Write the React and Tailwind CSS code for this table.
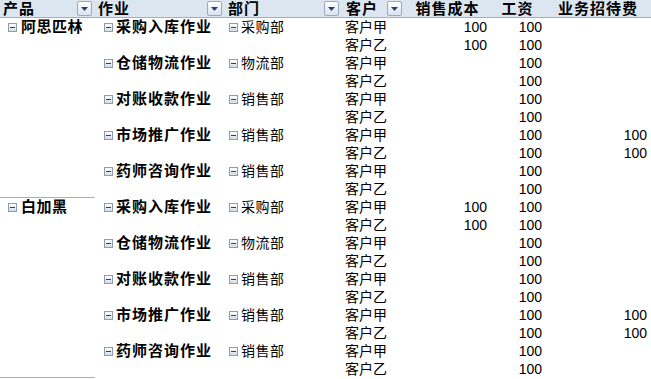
import React from "react";

const works = [
  { name: "采购入库作业", dept: "采购部", rows: [["客户甲", "100", "100", ""], ["客户乙", "100", "100", ""]] },
  { name: "仓储物流作业", dept: "物流部", rows: [["客户甲", "", "100", ""], ["客户乙", "", "100", ""]] },
  { name: "对账收款作业", dept: "销售部", rows: [["客户甲", "", "100", ""], ["客户乙", "", "100", ""]] },
  { name: "市场推广作业", dept: "销售部", rows: [["客户甲", "", "100", "100"], ["客户乙", "", "100", "100"]] },
  { name: "药师咨询作业", dept: "销售部", rows: [["客户甲", "", "100", ""], ["客户乙", "", "100", ""]] },
];

const products = ["阿思匹林", "白加黑"];

function Drop() {
  return (
    <div className="w-[15px] h-[15px] border border-[#9aa9bf] rounded-[2px] bg-gradient-to-b from-[#ffffff] to-[#dbe3ee] flex items-center justify-center">
      <svg width="7" height="4" viewBox="0 0 7 4">
        <path d="M0 0 L7 0 L3.5 4 Z" fill="#2b3f73" />
      </svg>
    </div>
  );
}

function Minus() {
  return (
    <div className="w-[9px] h-[9px] border border-[#8d9bb0] bg-gradient-to-b from-[#ffffff] to-[#d5dde8] flex items-center justify-center shrink-0">
      <div className="w-[5px] h-px bg-[#33415c]" />
    </div>
  );
}

export default function App() {
  return (
    <div className="w-[651px] h-[379px] bg-white overflow-hidden text-black font-['Liberation_Sans','Noto_Sans_CJK_SC',sans-serif] text-[14px]">
      {/* header */}
      <div className="flex h-[18px] bg-[#dce6f1] border-b border-[#95b3d7] font-bold text-[15px] leading-[17px] tracking-[1px]">
        <div className="w-[95px] flex items-center justify-between pl-[3px] pr-[3px]">
          <span>产品</span>
          <Drop />
        </div>
        <div className="w-[130px] flex items-center justify-between pl-[3px] pr-[3px]">
          <span>作业</span>
          <Drop />
        </div>
        <div className="w-[115px] flex items-center justify-between pl-[3px] pr-[1px]">
          <span>部门</span>
          <Drop />
        </div>
        <div className="w-[65px] flex items-center justify-between pl-[6px] pr-[3px]">
          <span>客户</span>
          <Drop />
        </div>
        <div className="w-[85px] text-center">销售成本</div>
        <div className="w-[55px] text-center">工资</div>
        <div className="w-[106px] text-center">业务招待费</div>
      </div>
      {products.map((p) => (
        <div key={p} className="flex">
          <div className="w-[95px] h-[180px] border-b border-[#95b3d7] flex items-start">
            <div className="flex items-center h-[18px] pl-[8px] gap-[4px]">
              <Minus />
              <span className="font-bold text-[15px] tracking-[0.5px]">{p}</span>
            </div>
          </div>
          <div className="flex flex-col">
            {works.map((w) => (
              <div key={w.name} className="flex h-[36px]">
                <div className="w-[130px] flex items-start">
                  <div className="flex items-center h-[18px] pl-[9px] gap-[3px]">
                    <Minus />
                    <span className="font-bold text-[15px] tracking-[1px]">{w.name}</span>
                  </div>
                </div>
                <div className="w-[115px] flex items-start">
                  <div className="flex items-center h-[18px] pl-[4px] gap-[3px]">
                    <Minus />
                    <span className="tracking-[0.5px]">{w.dept}</span>
                  </div>
                </div>
                <div className="flex flex-col">
                  {w.rows.map((r) => (
                    <div key={r[0]} className="flex h-[18px] leading-[18px]">
                      <div className="w-[65px] pl-[5px]">{r[0]}</div>
                      <div className="w-[85px] text-right pr-[3px]">{r[1]}</div>
                      <div className="w-[55px] text-right pr-[3px]">{r[2]}</div>
                      <div className="w-[106px] text-right pr-[4px]">{r[3]}</div>
                    </div>
                  ))}
                </div>
              </div>
            ))}
          </div>
        </div>
      ))}
    </div>
  );
}
